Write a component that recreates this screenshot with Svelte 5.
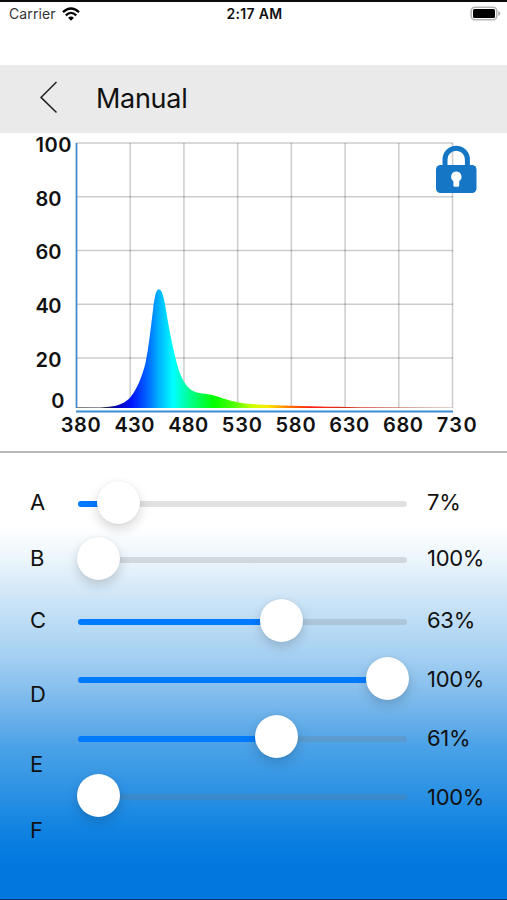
<script lang="ts">
	interface Channel {
		name: string;
		position: number;
		value: string;
	}

	const channels: Channel[] = [
		{ name: 'A', position: 0.07, value: '7%' },
		{ name: 'B', position: 0, value: '100%' },
		{ name: 'C', position: 0.634, value: '63%' },
		{ name: 'D', position: 1, value: '100%' },
		{ name: 'E', position: 0.617, value: '61%' },
		{ name: 'F', position: 0, value: '100%' }
	];

	const wavelengths = [380, 430, 480, 530, 580, 630, 680, 730];
	const levels = [
		{ label: '100', y: 19, width: 36 },
		{ label: '80', y: 72.5, width: 26 },
		{ label: '60', y: 126.3, width: 26 },
		{ label: '40', y: 180, width: 26 },
		{ label: '20', y: 233.8, width: 26 }
	];

	const left = 76.5;
	const top = 10;
	const step = 53.72;

	const spectrum: [string, string][] = [
		['0%', '#555'],
		['8%', '#224'],
		['11%', '#0000b8'],
		['15%', '#0018ff'],
		['19%', '#0068ff'],
		['22%', '#00b4ff'],
		['25.8%', '#00ffff'],
		['30%', '#00ff94'],
		['36.5%', '#00ff00'],
		['42%', '#50ff00'],
		['47%', '#d0ff00'],
		['51%', '#ffe800'],
		['56%', '#ff8000'],
		['62%', '#ff2010'],
		['72%', '#d83020'],
		['100%', '#c0a8a0']
	];
</script>

<div class="screen">
	<div class="status">
		<div class="carrier">
			<span>Carrier</span>
			<svg class="wifi" viewBox="0 0 18 14" width="18" height="14">
				<path d="M1 5.2Q9-2.2 17 5.2" />
				<path d="M3.8 8.3Q9 3.5 14.2 8.3" />
				<path class="dot" d="M6.1 10.7Q9 8.2 11.9 10.7L9 13.7Z" />
			</svg>
		</div>
		<span class="time">2:17 AM</span>
		<svg class="battery" viewBox="0 0 31 15" width="31" height="15">
			<rect class="case" x="1.2" y="1.2" width="25.6" height="12.6" rx="3.8" />
			<rect x="3" y="3" width="22" height="9" rx="1.5" />
			<path class="cap" d="M28.3 5Q30.3 6 30.3 7.5T28.3 10Z" />
		</svg>
	</div>

	<header>
		<svg class="back" viewBox="0 0 20 34" width="20" height="34">
			<path d="M17.5 2L2 17.4L17.5 32.5" />
		</svg>
		<h1>Manual</h1>
	</header>

	<svg class="chart" viewBox="0 0 507 318" width="507" height="318">
		<defs>
			<linearGradient id="spectrum" gradientUnits="userSpaceOnUse" x1="76" y1="0" x2="453" y2="0">
				{#each spectrum as [offset, color]}
					<stop {offset} stop-color={color} />
				{/each}
			</linearGradient>
		</defs>

		<g class="grid">
			{#each levels as _, i}
				<line x1={left} x2="453" y1={top + i * step} y2={top + i * step} />
			{/each}
			{#each wavelengths as _, i}
				<line x1={left + i * step} x2={left + i * step} y1={top} y2="275" />
			{/each}
		</g>

		<path
			fill="url(#spectrum)"
			d="M76 275V274.2L100 274.4L109 273.8C119 273 126 269.5 131 263.5C137 256 142 244 145.5 230C149 213 150.5 196 153 177C154.5 164 156 156.3 159 156.3C162 156.3 164 165 165.5 174C168 190 172 212 177 231C181 245 185 252.5 192 257.5C198 261 206 260 214 262.5C224 265.5 231 268.5 242 270C254 271.7 272 272 292 272.8C316 273.5 340 274 370 274.3L453 274.6V275Z"
		/>
		<path class="axis" d="M76.5 10V275" />
		<path class="axis base" d="M76 278.4H453" />

		<g class="labels">
			{#each levels as level}
				<text x="35.5" y={level.y} textLength={level.width}>{level.label}</text>
			{/each}
			<text x="51.3" y="275">0</text>
			{#each wavelengths as nm, i}
				<text x={left + i * step + 4.2} y="299" text-anchor="middle" textLength="40">{nm}</text>
			{/each}
		</g>

		<g class="lock">
			<path class="shackle" d="M445 36V26.5A11.2 11.2 0 0 1 467.4 26.5V36" />
			<rect x="436" y="32" width="40.5" height="28" rx="4.5" />
			<path class="keyhole" d="M456.3 38.6A5.2 5.2 0 0 1 459.2 48.1V52.5Q459.2 53.8 457.9 53.8H454.7Q453.4 53.8 453.4 52.5V48.1A5.2 5.2 0 0 1 456.3 38.6Z" />
		</g>
	</svg>

	<div class="panel">
		<div class="names">
			{#each channels as channel}
				<span>{channel.name}</span>
			{/each}
		</div>
		<div class="sliders">
			{#each channels as channel}
				<div class="slider" style="--pos: {channel.position}">
					<div class="track"><div class="fill"></div></div>
					<div class="thumb"></div>
				</div>
			{/each}
		</div>
		<div class="values">
			{#each channels as channel}
				<span>{channel.value}</span>
			{/each}
		</div>
	</div>
</div>

<style>
	:global(body) {
		margin: 0;
	}
	.screen {
		box-sizing: border-box;
		width: 507px;
		height: 900px;
		overflow: hidden;
		display: flex;
		flex-direction: column;
		border-top: 2px solid #0b0b0d;
		border-bottom: 1px solid #04336b;
		background: #fff;
		color: #111;
		font-family: Inter, 'Liberation Sans', sans-serif;
	}

	/* status bar */
	.status {
		display: grid;
		grid-template-columns: 1fr auto 1fr;
		align-items: center;
		height: 23px;
		margin-bottom: 40px;
		padding: 0 6px 0 9px;
		font-size: 14px;
	}
	.carrier {
		display: flex;
		align-items: center;
		gap: 6px;
		color: #333;
		letter-spacing: 0.1px;
	}
	.wifi {
		fill: none;
		stroke: #000;
		stroke-width: 2.3;
	}
	.wifi .dot {
		fill: #000;
		stroke: none;
	}
	.time {
		font-weight: 600;
		letter-spacing: 0.35px;
		margin-right: 1px;
	}
	.battery {
		justify-self: end;
	}
	.battery .case {
		fill: #fff;
		stroke: #b5b5b5;
		stroke-width: 1.6;
	}
	.battery .cap {
		fill: #aaa;
	}

	/* title bar */
	header {
		display: flex;
		align-items: center;
		flex-shrink: 0;
		gap: 37px;
		height: 68px;
		padding-left: 39px;
		background: #eaeaea;
	}
	.back {
		fill: none;
		stroke: #222;
		stroke-width: 1.5;
		margin-top: -5px;
	}
	h1 {
		margin: -1px 0 0;
		font-size: 27px;
		font-weight: 400;
		letter-spacing: -0.3px;
	}

	/* spectrum chart */
	.chart {
		display: block;
		flex-shrink: 0;
	}
	.grid line {
		stroke: #000;
		stroke-opacity: 0.2;
		stroke-width: 1.5;
	}
	.axis {
		stroke: #3b8bd0;
		stroke-width: 1.6;
	}
	.axis.base {
		stroke-width: 2;
	}
	.labels {
		fill: #111;
		font-size: 20px;
		font-weight: 600;
	}
	.lock {
		fill: #1676c6;
	}
	.shackle {
		fill: none;
		stroke: #1676c6;
		stroke-width: 5;
	}
	.keyhole {
		fill: #fff;
	}

	/* channel sliders */
	.panel {
		flex: 1;
		display: grid;
		grid-template-columns: 48px 329px 1fr;
		padding: 21px 0 0 30px;
		border-top: 2px solid #b9b9b9;
		background: linear-gradient(
			180deg,
			#fff 74px,
			#ebf5fc 107px,
			#cce4f7 147px,
			#a5d0f2 203px,
			#7bb9ec 248px,
			#4ca2e7 293px,
			#2990e4 343px,
			#0f82e1 378px,
			#0078de 414px
		);
		font-size: 22px;
	}
	.names,
	.sliders,
	.values {
		display: grid;
		align-content: start;
		align-items: center;
		grid-template-rows: 56px 56px 68px 50px 68px 50px;
	}
	.names {
		grid-template-rows: 56px 56px 68px 80px 60px 72px;
	}
	.sliders {
		grid-template-rows: 56px 56px 68px 48px 69px 48px;
	}
	.slider {
		--travel: calc(var(--pos) * 289.5px);
		position: relative;
		display: flex;
		align-items: center;
		height: 43px;
	}
	.track {
		width: 100%;
		height: 6px;
		margin-top: 4px;
		border-radius: 3px;
		background: rgba(120, 120, 120, 0.22);
		overflow: hidden;
	}
	.fill {
		width: calc(20px + var(--travel));
		height: 100%;
		background: #007aff;
	}
	.thumb {
		position: absolute;
		top: 0;
		left: calc(var(--travel) - 1.5px);
		width: 43px;
		height: 43px;
		border-radius: 50%;
		background: #fff;
		box-shadow:
			0 0 2px rgba(0, 0, 0, 0.08),
			0 5px 12px rgba(0, 0, 0, 0.16);
	}
	.values {
		padding-left: 20px;
		letter-spacing: -0.3px;
	}
</style>
